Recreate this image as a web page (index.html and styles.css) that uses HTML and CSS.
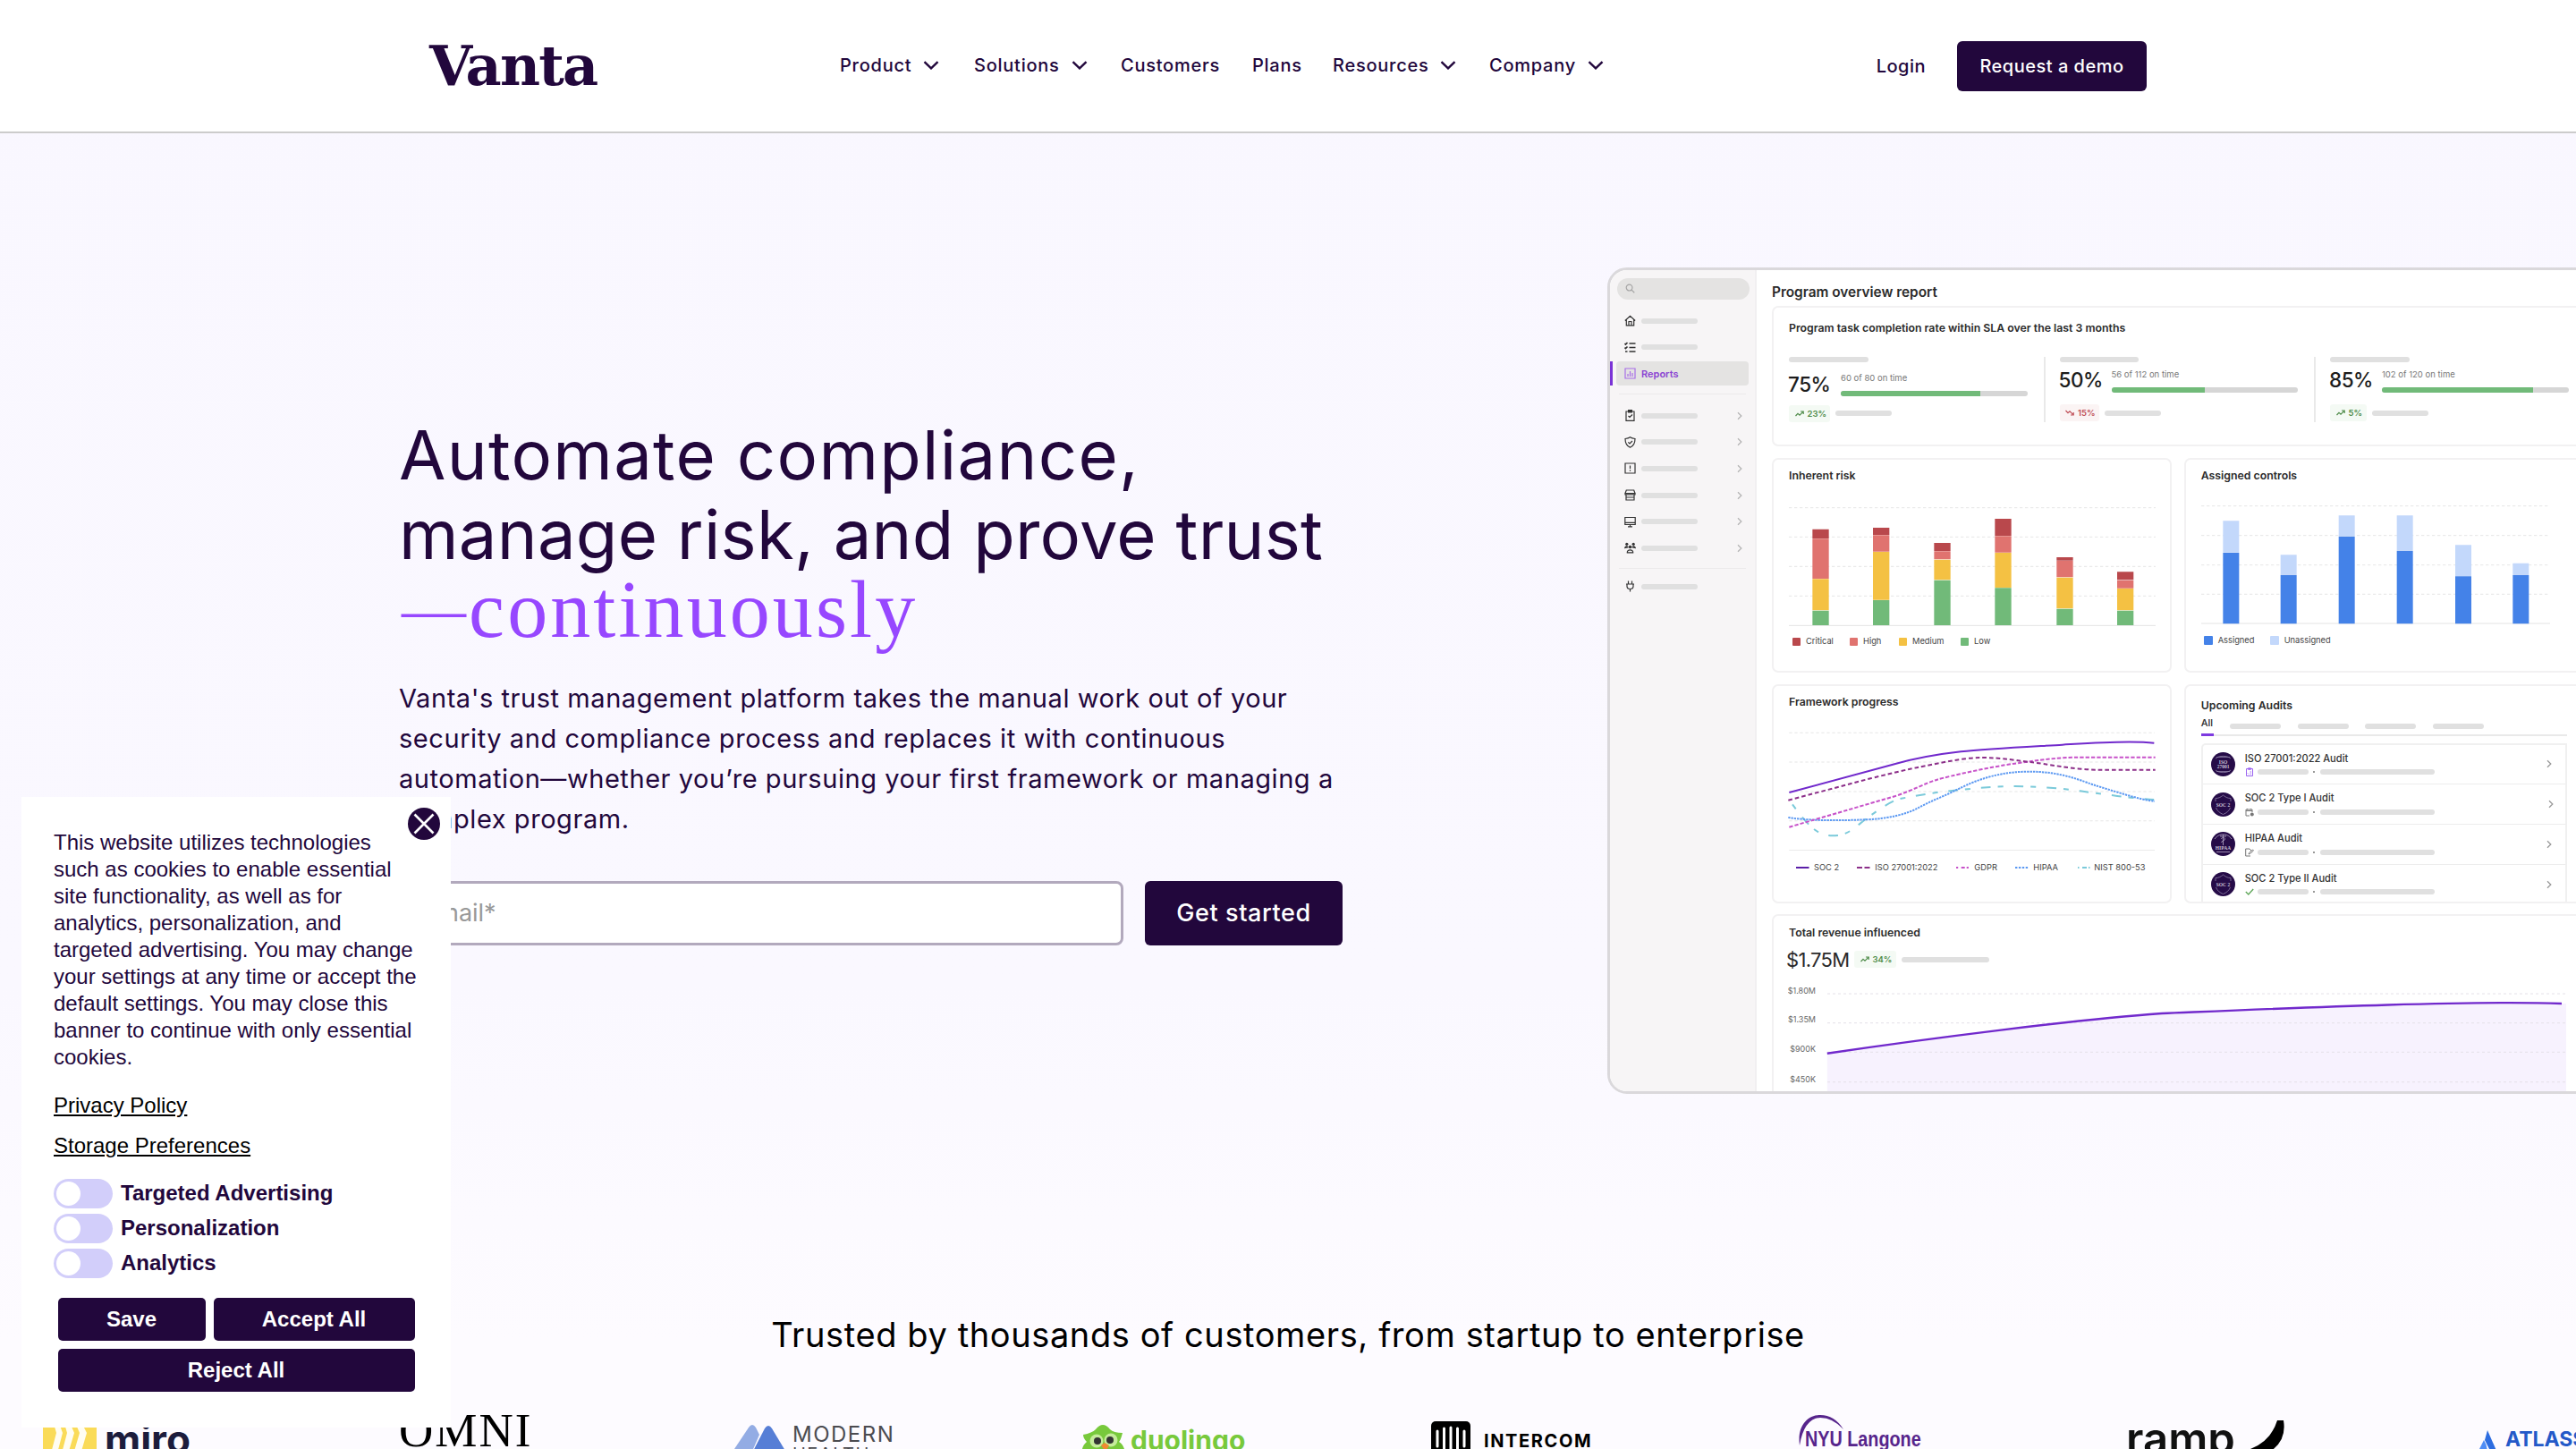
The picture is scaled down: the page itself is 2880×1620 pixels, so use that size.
FILE: index.html
```html
<!DOCTYPE html>
<html lang="en">

<head>
    <meta charset="UTF-8">
    <meta name="viewport" content="width=device-width, initial-scale=1.0">
    <title>Vanta</title>
    <link rel="stylesheet" href="styles.css">
</head>

<body>
    <!-- shared icons -->
    <svg class="sprite" width="0" height="0">
        <symbol id="chev-down" viewBox="0 0 18 10"><path d="M1.5 1.2 9 8.4l7.5-7.2" fill="none" stroke="#22073c" stroke-width="2.4"/></symbol>
        <symbol id="chev" viewBox="0 0 6 10"><path d="M1 1.2 4.8 5 1 8.8" fill="none" stroke="currentColor" stroke-width="1.3"/></symbol>
        <symbol id="up" viewBox="0 0 10 7"><path d="M.5 6 3 3.3l2 1.9L8.6 1.6M6 1h3.2v3" fill="none" stroke="currentColor" stroke-width="1.2"/></symbol>
        <symbol id="down" viewBox="0 0 10 7"><path d="M.5 1 3 3.7l2-1.9 3.6 3.6M6 6h3.2V3" fill="none" stroke="currentColor" stroke-width="1.2"/></symbol>
    </svg>

    <header class="header">
        <a class="logo">Vanta</a>
        <nav class="nav">
            <a>Product <svg><use href="#chev-down"/></svg></a>
            <a>Solutions <svg><use href="#chev-down"/></svg></a>
            <a>Customers</a>
            <a>Plans</a>
            <a>Resources <svg><use href="#chev-down"/></svg></a>
            <a>Company <svg><use href="#chev-down"/></svg></a>
        </nav>
        <div class="actions">
            <a class="login">Login</a>
            <a class="demo">Request a demo</a>
        </div>
    </header>

    <section class="hero">
        <div class="hero-text">
            <h1>
                <span class="l1">Automate compliance,</span><br>
                <span class="l2">manage risk, and prove trust</span>
                <em><span class="dash">—</span>continuously</em>
            </h1>
            <p>Vanta's trust management platform takes the manual work out of your<br>security and compliance process and replaces it with continuous<br>automation—whether you’re pursuing your first framework or managing a<br>complex program.</p>
            <div class="signup">
                <div class="email">Email*</div>
                <div class="start">Get started</div>
            </div>
        </div>

        <div class="app">
            <aside class="sidebar">
                <div class="search"><svg viewBox="0 0 12 12"><circle cx="5" cy="5" r="3.7"/><path d="m7.8 7.8 3.4 3.4"/></svg></div>
                <div class="item"><svg viewBox="0 0 13 13"><path d="M.8 6.5 6.5 1.3l5.700 5.200M2.300 5.500v6.300h8.400V5.500M5 11.800V7.500h3v4.300"/></svg><i></i></div>
                <div class="item"><svg viewBox="0 0 13 13"><path stroke-width="1.700" d="M5.500 2h7M5.500 6.500h7M5.500 11h7M.5 2l1 1 2-2M.5 6.500l1 1 2-2M1 11h2.500"/></svg><i></i></div>
                <div class="item active"><svg viewBox="0 0 13 13"><path d="M1 1h11v11H1zM4 10V7M6.500 10V4M9 10V6"/></svg><b>Reports</b></div>
                <hr>
                <div class="item"><svg viewBox="0 0 13 13"><path d="M2 2h9v10.300H2zM4.500 7l1.500 1.500 3-3"/><path class="solid" d="M4 0h5v3.500H4z"/></svg><i></i><svg class="go"><use href="#chev"/></svg></div>
                <div class="item"><svg viewBox="0 0 13 13"><path d="M6.500.8c1.800 1.300 3.500 1.500 5.500 1.700 0 5-1.300 8-5.500 9.800C2.300 10.500 1 7.500 1 2.500 3 2.300 4.700 2.100 6.500.8zM4.300 6.300 6 8l3-3"/></svg><i></i><svg class="go"><use href="#chev"/></svg></div>
                <div class="item"><svg viewBox="0 0 13 13"><path d="M1 1h11v11H1zM6.500 3.500V7M6.500 8.300v1.500"/></svg><i></i><svg class="go"><use href="#chev"/></svg></div>
                <div class="item"><svg viewBox="0 0 13 13"><path d="M2.300 1h8.400L12 4.500H1zM1 4.500v1.300h11V4.500M2 6v6h9V6M2 9h9"/></svg><i></i><svg class="go"><use href="#chev"/></svg></div>
                <div class="item"><svg viewBox="0 0 13 13"><path d="M.8 1.500h11.400v8H.8zM.8 7.300h11.400M4 11.800h5M6.500 9.500v2.300"/></svg><i></i><svg class="go"><use href="#chev"/></svg></div>
                <div class="item"><svg viewBox="0 0 13 13"><g class="solid"><circle cx="2.8" cy="2.3" r="1.6"/><circle cx="10.2" cy="2.3" r="1.6"/><circle cx="6.5" cy="5.5" r="1.8"/><path d="M0 7.300c.2-4 4.500-4 4.700-1zM13 7.300c-.2-4-4.500-4-4.700-1z"/></g><path d="M3.300 11.800c0-4 6.400-4 6.400 0z"/></svg><i></i><svg class="go"><use href="#chev"/></svg></div>
                <hr class="last">
                <div class="item"><svg viewBox="0 0 13 13"><path d="M4.500.5v3M8.500.5v3M2 4h9M3 4v2.500c0 4 7 4 7 0V4M6.500 9.500v3"/></svg><i></i></div>
            </aside>

            <main class="main">
                <h2>Program overview report</h2>
                <div class="cards">
                    <div class="card wide">
                        <h3>Program task completion rate within SLA over the last 3 months</h3>
                        <div class="metrics">
                            <div class="metric first">
                                <i class="ph title"></i>
                                <div class="rate">
                                    <strong>75%</strong>
                                    <div><span>60 of 80 on time</span><div class="track"><div style="width: 75%"></div></div></div>
                                </div>
                                <div class="trend"><span class="chip"><svg><use href="#up"/></svg>23%</span><i class="ph"></i></div>
                            </div>
                            <div class="metric">
                                <i class="ph title"></i>
                                <div class="rate">
                                    <strong>50%</strong>
                                    <div><span>56 of 112 on time</span><div class="track"><div style="width: 50%"></div></div></div>
                                </div>
                                <div class="trend"><span class="chip red"><svg><use href="#down"/></svg>15%</span><i class="ph"></i></div>
                            </div>
                            <div class="metric">
                                <i class="ph title"></i>
                                <div class="rate">
                                    <strong>85%</strong>
                                    <div><span>102 of 120 on time</span><div class="track"><div style="width: 81%"></div></div></div>
                                </div>
                                <div class="trend"><span class="chip small"><svg><use href="#up"/></svg>5%</span><i class="ph"></i></div>
                            </div>
                        </div>
                    </div>

                    <div class="card bars">
                        <h3>Inherent risk</h3>
                        <svg class="risk" viewBox="120 190 1230 410">
                            <path class="grid" d="M120 201h1230M120 299h1230M120 398h1230M120 497h1230"/>
                            <path class="axis" d="M120 596h1230"/>
                            <g fill="#b9484c"><path d="M199 273h55v31h-55zM402 268h55v24h-55zM607 319h55v27h-55zM811 238h55v57h-55zM1018 367h55v11h-55zM1221 416h55v27h-55z"/></g>
                            <g fill="#e0736f"><path d="M199 305h55v134h-55zM402 293h55v55h-55zM607 347h55v27h-55zM811 296h55v55h-55zM1018 379h55v55h-55zM1221 444h55v27h-55z"/></g>
                            <g fill="#f4c143"><path d="M199 440h55v105h-55zM402 349h55v161h-55zM607 375h55v68h-55zM811 352h55v117h-55zM1018 435h55v104h-55zM1221 472h55v73h-55z"/></g>
                            <g fill="#71ba79"><path d="M199 546h55v49h-55zM402 511h55v84h-55zM607 444h55v151h-55zM811 470h55v125h-55zM1018 540h55v55h-55zM1221 546h55v49h-55z"/></g>
                        </svg>
                        <div class="legend risk-legend">
                            <span class="critical">Critical</span><span class="high">High</span><span class="medium">Medium</span><span class="low">Low</span>
                        </div>
                    </div>

                    <div class="card bars">
                        <h3>Assigned controls</h3>
                        <svg class="controls" viewBox="122 185 1170 410">
                            <path class="grid" d="M122 196h1170M122 295h1170M122 394h1170M122 492h1170"/>
                            <path class="axis" d="M122 590h1170"/>
                            <path fill="#c3d8fb" d="M195 246h54v106h-54zM388 360h54v66h-54zM583 228h54v69h-54zM778 228h54v117h-54zM974 327h54v104h-54zM1167 388h54v38h-54z"/>
                            <path fill="#4482e8" d="M195 353h54v238h-54zM388 427h54v164h-54zM583 298h54v293h-54zM778 346h54v245h-54zM974 432h54v159h-54zM1167 427h54v164h-54z"/>
                        </svg>
                        <div class="legend controls-legend">
                            <span class="assigned">Assigned</span><span class="unassigned">Unassigned</span>
                        </div>
                    </div>

                    <div class="card progress">
                        <h3>Framework progress</h3>
                        <svg class="lines" viewBox="120 195 1235 410">
                            <path class="grid" d="M124 208h1226M124 306h1226M124 405h1226M124 503h1226"/>
                            <path class="axis" d="M124 602h1226"/>
                            <g fill="none" stroke-width="6">
                                <path stroke="#7bcada" stroke-dasharray="18 36 32 24" d="M135 448C180 510 215 553 268 553S340 528 380 498S470 433 500 428S600 409 650 404S800 387 880 387S1050 396 1100 403S1300 431 1350 432"/>
                                <path stroke="#5c99f2" stroke-dasharray="7 3" d="M121 492C200 504 300 502 380 499S520 480 560 458S640 422 680 402S800 340 920 338S1110 372 1150 384S1310 436 1350 437"/>
                                <path stroke="#c752c9" stroke-dasharray="13 6" d="M124 524L480 420C540 400 580 377 620 365S800 322 880 311S1020 290 1110 290H1352"/>
                                <path stroke="#8c2f89" stroke-dasharray="14 9" d="M121 434L400 360C480 341 520 330 560 323S700 291 770 291S900 303 940 307S1080 332 1160 332H1352"/>
                                <path stroke="#7129cc" d="M124 408L480 312C560 290 610 281 700 271S960 253 1040 248S1260 232 1348 242"/>
                            </g>
                        </svg>
                        <div class="legend line-legend">
                            <span><svg viewBox="0 0 15 2"><path stroke="#5b1fa8" d="M0 1h14.500"/></svg>SOC 2</span>
                            <span><svg viewBox="0 0 15 2"><path stroke="#8c2f89" stroke-dasharray="6 2.500" d="M0 1h14.500"/></svg>ISO 27001:2022</span>
                            <span><svg viewBox="0 0 15 2"><path stroke="#c752c9" stroke-dasharray="2.200 3.500 4 2" d="M0 1h14.500"/></svg>GDPR</span>
                            <span><svg viewBox="0 0 15 2"><path stroke="#5c99f2" stroke-dasharray="2.400 1.500" d="M0 1h14.500"/></svg>HIPAA</span>
                            <span class="nist"><svg viewBox="0 0 15 2"><path stroke="#7bcada" stroke-dasharray="1.500 3.500 5 2" d="M0 1h14.500"/></svg>NIST 800-53</span>
                        </div>
                    </div>

                    <div class="card audits">
                        <h3>Upcoming Audits</h3>
                        <div class="tabs"><span>All</span><i class="ph"></i><i class="ph"></i><i class="ph"></i><i class="ph"></i></div>
                        <div class="list">
                            <div class="audit">
                                <svg class="badge" viewBox="0 0 27 27"><circle cx="13.500" cy="13.500" r="13.500" fill="#260c48"/><path d="M5 7c4-3.500 13-3.500 17 0M6 5.500h15M5 20c4 3.500 13 3.500 17 0M6 21.500h15" fill="none" stroke="#8d7fa6" stroke-width=".8"/><text x="13.500" y="13" text-anchor="middle" class="badge-text">ISO</text><text x="13.500" y="18" text-anchor="middle" class="badge-text">27001</text></svg>
                                <div class="info">
                                    <b>ISO 27001:2022 Audit</b>
                                    <div><svg viewBox="0 0 10 10"><path stroke="#9a63f0" d="M1.500 1.500h7v8h-7zM3.500.8h3v1.500h-3zM3 6.500l1 1M5.500 5H7M5.500 7.200H7"/></svg><i class="ph"></i><u></u><i class="ph long"></i></div>
                                </div>
                                <svg class="go"><use href="#chev"/></svg>
                            </div>
                            <div class="audit">
                                <svg class="badge" viewBox="0 0 27 27"><circle cx="13.500" cy="13.500" r="13.500" fill="#260c48"/><path d="M5 10V6.500c4 0 6-1.500 8.500-3.500 2.500 2 4.500 3.500 8.500 3.500V10M5.500 17c1.500 4 4.500 6 8 7.500 3.500-1.500 6.500-3.500 8-7.500" fill="none" stroke="#8d7fa6" stroke-width=".8"/><text x="13.500" y="15.500" text-anchor="middle" class="badge-text">SOC 2</text></svg>
                                <div class="info">
                                    <b>SOC 2 Type I Audit</b>
                                    <div><svg viewBox="0 0 10 10"><path stroke="#777" d="M5 9H1V2h7v3M1 3.500h7M2.500 1v1M6.500 1v1"/><circle cx="7.800" cy="7.500" r="2" fill="#777"/></svg><i class="ph"></i><u></u><i class="ph long"></i></div>
                                </div>
                                <svg class="go shift"><use href="#chev"/></svg>
                            </div>
                            <div class="audit">
                                <svg class="badge" viewBox="0 0 27 27"><circle cx="13.500" cy="13.500" r="13.500" fill="#260c48"/><path d="M4 8c3-4 6-5 9.500-5s6.500 1 9.500 5M13.500 3v12M10 5h7M11.500 8c0-2 4-2 4 0s-4 2-4 4M6 22.500h15" fill="none" stroke="#a99dbd" stroke-width=".9"/><text x="13.500" y="19.500" text-anchor="middle" class="badge-text">HIPAA</text></svg>
                                <div class="info">
                                    <b>HIPAA Audit</b>
                                    <div><svg viewBox="0 0 10 10"><path stroke="#777" d="M6 9H.7V1H5l2 2M4 7l.5-1.500 4-3.500 1 1-4 3.500z"/></svg><i class="ph"></i><u></u><i class="ph long"></i></div>
                                </div>
                                <svg class="go"><use href="#chev"/></svg>
                            </div>
                            <div class="audit">
                                <svg class="badge" viewBox="0 0 27 27"><circle cx="13.500" cy="13.500" r="13.500" fill="#260c48"/><path d="M5 10V6.500c4 0 6-1.500 8.500-3.500 2.500 2 4.500 3.500 8.500 3.500V10M5.500 17c1.500 4 4.500 6 8 7.500 3.500-1.500 6.500-3.500 8-7.500" fill="none" stroke="#8d7fa6" stroke-width=".8"/><text x="13.500" y="15.500" text-anchor="middle" class="badge-text">SOC 2</text></svg>
                                <div class="info">
                                    <b>SOC 2 Type II Audit</b>
                                    <div><svg viewBox="0 0 10 10"><path stroke="#62a85c" stroke-width="1.400" d="m.8 5 3 3 5.400-6"/></svg><i class="ph"></i><u></u><i class="ph long"></i></div>
                                </div>
                                <svg class="go"><use href="#chev"/></svg>
                            </div>
                        </div>
                    </div>

                    <div class="card wide revenue">
                        <h3>Total revenue influenced</h3>
                        <div class="total"><strong>$1.75M</strong><span class="chip"><svg><use href="#up"/></svg>34%</span><i class="ph"></i></div>
                        <svg class="area" viewBox="0 0 870 180">
                            <path fill="#f7f2fe" d="M43.800 82.700C150 67 320 45 418 38C540 33 760 23 870 27V180H43.800z"/>
                            <path stroke="#e4e0e8" stroke-dasharray="3 3" d="M44 16h826M44 48.700h826M44 81.300h826M44 114.700h826"/>
                            <path fill="none" stroke="#7129cc" stroke-width="2.400" d="M43.800 82.700C150 67 320 45 418 38C540 33 760 23 865 27"/>
                            <g class="ticks"><text x="31" y="15.700">$1.80M</text><text x="31" y="48.300">$1.35M</text><text x="31" y="81.300">$900K</text><text x="31" y="114.700">$450K</text></g>
                        </svg>
                    </div>
                </div>
            </main>
        </div>
    </section>

    <section class="trusted">
        <h2>Trusted by thousands of customers, from startup to enterprise</h2>
        <div class="logos">
            <div class="miro"><svg viewBox="0 0 60 60"><rect width="60" height="60" rx="12" fill="#fadb58"/><path fill="#fffdf2" d="M11 8h6l5 14-9 34H6l9-34zM23 8h6l6 14-10 34h-7l9-34zM35 8h7l7 14-10 34h-8l10-34z"/></svg><span>miro</span></div>
            <div class="omni">OMNI</div>
            <div class="modern"><svg viewBox="0 0 56 40"><path fill="#93ace4" d="m-8 40 24-36q4-6 8 0l4 8-12 28z"/><path fill="#567ed6" d="M16 40 34 5q4-6 8 0l21 35z"/></svg><div>MODERN<small>HEALTH</small></div></div>
            <div class="duo"><svg viewBox="0 0 48 40"><path fill="#78c93c" d="M2 12q10-2 14-6 8-10 16 0 4 4 14 4-2 8-4 10 4 2 6 8l-6 12H2q-4-14 4-20-4-4-4-8z"/><circle cx="17" cy="19" r="7.500" fill="#c5eb9b"/><circle cx="33" cy="18" r="7.500" fill="#c5eb9b"/><circle cx="18" cy="19" r="4" fill="#333"/><circle cx="32" cy="18" r="4" fill="#333"/><path fill="#f08a32" d="m22 24 4-3 5 3-4 7z"/></svg><span>duolingo</span></div>
            <div class="intercom"><svg viewBox="0 0 44 44"><rect width="44" height="44" rx="5"/><path d="M7 11v17M14.500 8v23M22 7v25M29.500 8v23M37 11v17" stroke="#fff" stroke-width="3" stroke-linecap="round"/></svg><span>INTERCOM</span></div>
            <div class="nyu"><svg viewBox="0 0 60 40"><path d="M3 36C0 14 12 2 26 2q16 0 26 16Q40 5 26 5 8 6 3 36z" fill="#57258c"/></svg><span>NYU Langone</span></div>
            <div class="ramp"><span>ramp</span><svg viewBox="0 0 44 36"><path d="M0 34Q28 26 36 0h7q4 24-17 36H0z"/></svg></div>
            <div class="atlas"><svg viewBox="0 0 22 30"><path fill="#2d6de0" d="M11 1 22 26h-7L8 12z"/><path fill="#4f8df5" d="M7 12q5 8 3 14H0z"/></svg><span>ATLASSIAN</span></div>
        </div>
    </section>

    <!-- cookie banner -->
    <div class="cookies">
        <svg class="close" viewBox="0 0 36 36"><circle cx="18" cy="18" r="18" fill="#22073c"/><path d="m7.500 7.500 21 21m0-21-21 21" stroke="#fff" stroke-width="2.600"/></svg>
        <p>This website utilizes technologies<br>such as cookies to enable essential<br>site functionality, as well as for<br>analytics, personalization, and<br>targeted advertising. You may change<br>your settings at any time or accept the<br>default settings. You may close this<br>banner to continue with only essential<br>cookies.</p>
        <a>Privacy Policy</a>
        <a>Storage Preferences</a>
        <div class="toggles">
            <div><i></i>Targeted Advertising</div>
            <div><i></i>Personalization</div>
            <div><i></i>Analytics</div>
        </div>
        <div class="buttons">
            <span>Save</span>
            <span>Accept All</span>
            <span class="reject">Reject All</span>
        </div>
    </div>
</body>

</html>
```
FILE: styles.css
```css
* {
    box-sizing: border-box;
}

body {
    margin: 0;
    height: 1620px;
    overflow: hidden;
    font-family: Inter, "Liberation Sans", sans-serif;
    color: #22073c;
    background: linear-gradient(#f9f7ff 0, #faf8ff 1100px, #fdfbff 1500px);
}

.sprite {
    position: absolute;
}

h1, h2, h3, p {
    margin: 0;
}

svg {
    display: block;
    flex: none;
}

/* header */
.header {
    display: flex;
    align-items: center;
    height: 149px;
    padding: 0 480px;
    background: #fff;
    border-bottom: 2px solid #ccc;
}

.logo {
    width: 459px;
    font-family: "DejaVu Serif", serif;
    font-weight: bold;
    font-size: 62px;
    line-height: 60px;
    letter-spacing: -1.8px;
}

.nav {
    display: grid;
    grid-template-columns: 150px 164px 147px 90px 175px 130px;
    padding-bottom: 1px;
    font-size: 20px;
    letter-spacing: .75px;
    font-weight: 500;
}

.nav a {
    display: flex;
    align-items: center;
    gap: 13px;
}

.nav svg {
    width: 18px;
    height: 10px;
}

.actions {
    display: flex;
    align-items: center;
    margin-left: auto;
    font-size: 20px;
    letter-spacing: .5px;
    font-weight: 500;
}

.login {
    margin-right: 35px;
}

.demo {
    width: 212px;
    line-height: 56px;
    text-align: center;
    color: #fff;
    background: #22073c;
    border-radius: 6px;
}

/* hero */
.hero {
    display: flex;
    height: 1318px;
    padding: 150px 0 0 446px;
    overflow: hidden;
}

.hero-text {
    flex: none;
    width: 1351px;
    padding-top: 165px;
}

h1 {
    font-size: 76px;
    line-height: 88.6px;
    font-weight: 400;
    white-space: nowrap;
}

.l1 {
    letter-spacing: 1.3px;
}

.l2 {
    letter-spacing: .25px;
}

h1 em {
    display: block;
    margin-top: -3px;
    font-family: "Liberation Serif", serif;
    font-style: normal;
    font-size: 90px;
    letter-spacing: 3.1px;
    color: #9747ff;
}

h1 .dash {
    margin-left: 3px;
    font-size: 72px;
    line-height: 0;
    vertical-align: 7px;
}

.hero-text p {
    margin-top: 31px;
    font-size: 29px;
    line-height: 45px;
    letter-spacing: .56px;
    white-space: nowrap;
}

.signup {
    display: flex;
    gap: 24px;
    margin-top: 47px;
}

.email {
    width: 810px;
    height: 72px;
    padding-left: 24px;
    line-height: 66px;
    font-size: 27px;
    color: #999;
    background: #fff;
    border: 3px solid #b2a9bd;
    border-radius: 8px;
}

.start {
    width: 221px;
    line-height: 72px;
    text-align: center;
    font-size: 27px;
    letter-spacing: .6px;
    font-weight: 500;
    color: #fff;
    background: #22073c;
    border-radius: 6px;
}

/* product preview */
.app {
    display: flex;
    flex: none;
    width: 1120px;
    height: 924px;
    overflow: hidden;
    background: #fff;
    border: 3px solid #dad8db;
    border-radius: 22px;
    color: #2b2b2b;
}

.ph, .item i {
    display: block;
    flex: none;
    width: 63px;
    height: 6px;
    background: #e0e0e0;
    border-radius: 3px;
}

.sidebar {
    flex: none;
    width: 164px;
    padding-top: 9px;
    background: #f7f5f6;
    border-right: 2px solid #f1eff1;
}

.search {
    width: 148px;
    height: 24px;
    margin: 0 0 9px 8px;
    padding: 6px 9px;
    background: #e4e3e2;
    border-radius: 12px;
}

.search svg {
    width: 11px;
    fill: none;
    stroke: #a5a5a5;
    stroke-width: 1.3;
}

.item {
    display: flex;
    align-items: center;
    gap: 6.5px;
    height: 29.6px;
    margin: 0 7px;
    padding-left: 8.5px;
    color: #b5b5b5;
}

.item svg {
    width: 13px;
    height: 13px;
    fill: none;
    stroke: #333;
    stroke-width: 1.2;
}

.item .solid {
    fill: #333;
    stroke: none;
}

.item .go {
    width: 6px;
    height: 10px;
    margin-left: 37px;
    stroke: none;
}

.item.active {
    position: relative;
    height: 27px;
    margin: 1.3px 7px 0;
    background: #e4e3e2;
    border-radius: 4px;
    font-size: 11px;
    color: #8a43d2;
}

/* marker on the edge of the sidebar */
.item.active::before {
    content: "";
    position: absolute;
    left: -7px;
    top: 0;
    width: 3px;
    height: 27px;
    background: #7a33d6;
}

.item.active svg {
    stroke: #a86ee8;
}

.item b {
    font-weight: 600;
}

.sidebar hr {
    height: 1px;
    margin: 8.5px 10px 9px;
    border: 0;
    background: #eceaeb;
}

.sidebar .last {
    margin: 7px 10px 5.5px;
}

.main {
    flex: none;
    padding: 15px 0 0 17px;
}

.main h2 {
    font-size: 15.4px;
    line-height: 20px;
    font-weight: 600;
}

.cards {
    display: grid;
    grid-template-columns: 446.7px 446.7px;
    grid-template-rows: 157px 240px 245px 300px;
    gap: 12.8px 14px;
    margin-top: 5px;
}

.card {
    padding: 10.2px 0 0 17px;
    overflow: hidden;
    border: 2px solid #f2f1f2;
    border-radius: 7px;
}

.wide {
    grid-column: 1 / 3;
    padding-top: 15px;
}

h3 {
    font-size: 12.3px;
    line-height: 16px;
    font-weight: 600;
}

.metrics {
    display: flex;
    gap: 16px;
    margin-top: 24px;
}

.metric {
    flex: none;
    width: 286.5px;
    height: 73px;
    border-right: 2px solid #e9e9e9;
}

.metric:last-child {
    border: 0;
}

.title {
    width: 88.5px;
}

.rate {
    display: flex;
    gap: 13px;
    height: 39.5px;
    margin-top: 7.6px;
}

.first .rate {
    height: 36px;
    margin-top: 11.5px;
}

.rate strong {
    width: 46px;
    margin-left: -1px;
    font-size: 22.5px;
    line-height: 24px;
    font-weight: 500;
    letter-spacing: -.5px;
    color: #1c1c1c;
}

.first strong {
    margin-top: 1.5px;
}

.rate span {
    display: block;
    font-size: 9.5px;
    line-height: 12px;
    color: #777;
}

.track {
    width: 208.5px;
    height: 6.5px;
    margin-top: 8px;
    overflow: hidden;
    background: #d6d6d6;
    border-radius: 4px;
}

.track div {
    height: 100%;
    background: #71ba79;
}

.trend {
    display: flex;
    align-items: center;
    gap: 6px;
}

.chip {
    display: flex;
    align-items: center;
    gap: 4px;
    width: 46px;
    height: 19px;
    padding-left: 6.5px;
    font-size: 9.5px;
    font-weight: 600;
    color: #4f8c4a;
    background: #f4faf4;
    border-radius: 3px;
}

.chip svg {
    width: 10px;
    height: 7px;
}

.chip.red {
    width: 44.5px;
    color: #c05059;
    background: #fbf4f4;
}

.chip.small {
    width: 41px;
}

/* charts */
.grid {
    fill: none;
    stroke: #e6e6e6;
    stroke-width: 3;
    stroke-dasharray: 10 8;
}

.axis {
    stroke: #e3e3e3;
    stroke-width: 3;
}

.risk {
    width: 410px;
    margin-top: 23.8px;
}

.controls {
    width: 390px;
    margin-top: 22.2px;
}

.lines {
    width: 411.7px;
    margin: 22px 0 0 -1px;
}

.legend {
    display: grid;
    margin: 11px 0 0 3.5px;
    font-size: 9.3px;
    line-height: 12px;
    white-space: nowrap;
    color: #444;
}

.legend span {
    display: flex;
    align-items: center;
}

.bars span::before {
    content: "";
    width: 9.5px;
    height: 9.5px;
    margin-right: 6px;
    border-radius: 1px;
}

.risk-legend {
    grid-template-columns: 64px 55px 69px auto;
}

.controls-legend {
    grid-template-columns: 74px auto;
}

.critical::before { background: #b9484c; }
.high::before { background: #e0736f; }
.medium::before { background: #f4c143; }
.low::before { background: #71ba79; }
.assigned::before { background: #4482e8; }
.unassigned::before { background: #c3d8fb; }

.line-legend {
    grid-template-columns: 68.3px 111px 66px 69.4px auto;
    margin: 13px 0 0 8px;
}

.line-legend svg {
    width: 15px;
    height: 2px;
    margin-right: 5px;
    stroke-width: 2;
}

.line-legend .nist svg {
    margin-right: 3.5px;
}

/* audits */
.audits {
    padding-top: 14.5px;
}

.tabs {
    display: flex;
    gap: 18.6px;
    width: 409px;
    height: 20.5px;
    margin-top: 5px;
    border-bottom: 2px solid #e9e9e9;
}

.tabs span {
    width: 14px;
    height: 21px;
    border-bottom: 3px solid #7e3ae0;
    font-size: 11px;
    line-height: 13px;
    font-weight: 500;
}

.tabs .ph {
    width: 57px;
    margin-top: 7px;
}

.list {
    width: 409px;
    height: 190px;
    margin-top: 8px;
    border: 2px solid #f0f0f0;
    border-radius: 5px 0 0 0;
}

.audit {
    display: flex;
    align-items: center;
    height: 44.7px;
    padding-left: 9px;
    border-bottom: 1.5px solid #ededed;
    color: #999;
}

.badge {
    width: 27px;
    height: 27px;
}

.badge-text {
    font: bold 5.5px "Liberation Serif", serif;
    fill: #c9c0d6;
}

.info {
    flex: none;
    width: 348px;
    padding-left: 11px;
}

.info b {
    display: block;
    font-size: 11.1px;
    line-height: 14px;
    font-weight: 500;
    color: #333;
}

.info div {
    display: flex;
    align-items: center;
    margin-top: 3.5px;
}

.info div svg {
    width: 10px;
    height: 10px;
    margin-right: 4px;
    fill: none;
}

.info .ph {
    width: 57px;
}

.info .long {
    width: 128px;
}

.info u {
    width: 2px;
    height: 2px;
    margin: 0 6px 0 5px;
    border-radius: 1px;
    background: #777;
}

.audit .go {
    width: 6px;
    height: 10px;
}

.audit .shift {
    margin-left: 2px;
}

/* revenue */
.revenue {
    padding-top: 10.5px;
}

.total {
    display: flex;
    align-items: center;
    gap: 6px;
    margin: 9px 0 0 -3px;
}

.total strong {
    width: 70px;
    font-size: 22px;
    line-height: 26px;
    font-weight: 400;
    letter-spacing: -.7px;
}

.total .chip {
    width: 47px;
}

.total .ph {
    width: 98px;
}

.area {
    width: 870px;
    height: 180px;
    margin: 9px 0 0 -1px;
}

.ticks {
    font-size: 9px;
    text-anchor: end;
    fill: #666;
}

/* customers */
.trusted h2 {
    font-size: 38px;
    line-height: 50px;
    font-weight: 400;
    letter-spacing: .6px;
    text-align: center;
    color: #000;
}

.logos {
    display: grid;
    grid-template-columns: 398px 375px 388px 391px 409px 368px 393px 160px;
    height: 103px;
    padding: 63px 0 0 48px;
    overflow: hidden;
}

.logos > div {
    display: flex;
    align-items: flex-start;
    white-space: nowrap;
}

.logos span {
    line-height: 1;
}

.miro {
    font-size: 44px;
    font-weight: 700;
    color: #1c1c3c;
    gap: 9px;
}

.miro svg {
    width: 60px;
}

.miro span {
    padding-top: 7px;
}

.omni {
    font-family: "Liberation Serif", serif;
    font-size: 53px;
    line-height: 38px;
    letter-spacing: 2px;
    color: #000;
}

.modern {
    gap: 9px;
    font-size: 24px;
    line-height: 24px;
    letter-spacing: 1.5px;
    color: #4b4b50;
    padding-top: 12px;
}

.modern svg {
    width: 56px;
}

.modern small {
    display: block;
    font-size: 20px;
    line-height: 20px;
}

.duo {
    gap: 7px;
    padding-top: 12px;
    font-size: 30px;
    font-weight: 700;
    color: #78c93c;
}

.duo svg {
    width: 48px;
}

.duo span {
    padding-top: 3px;
}

.intercom {
    gap: 15px;
    padding-top: 9px;
    font-size: 20px;
    font-weight: 700;
    letter-spacing: 1.6px;
    color: #000;
}

.intercom svg {
    width: 44px;
}

.intercom span {
    padding-top: 12px;
}

.nyu {
    font-family: "Liberation Sans", sans-serif;
    font-size: 23px;
    font-weight: 700;
    color: #57258c;
}

.nyu svg {
    width: 60px;
    margin-right: -51px;
}

.nyu span {
    padding-top: 18px;
    transform: scaleX(.86);
    transform-origin: left;
}

.ramp {
    gap: 11px;
    font-size: 49px;
    font-weight: 600;
    color: #111;
}

.ramp span {
    padding-top: 4px;
}

.ramp svg {
    width: 44px;
    margin-top: 8px;
}

.atlas {
    gap: 9px;
    padding-top: 18px;
    font-size: 23px;
    font-weight: 700;
    color: #2459c8;
}

.atlas svg {
    width: 22px;
}

/* cookie banner */
.cookies {
    position: fixed;
    left: 24px;
    top: 891px;
    width: 480px;
    height: 705px;
    padding: 36px 36px 0;
    background: #fff;
    font-family: "Liberation Sans", Arial, sans-serif;
    font-size: 24px;
    white-space: nowrap;
}

.cookies p {
    margin-bottom: 24px;
    line-height: 30px;
}

.cookies a {
    display: block;
    margin-bottom: 15px;
    line-height: 30px;
    color: #000;
    text-decoration: underline;
}

.close {
    position: absolute;
    left: 432px;
    top: 12px;
    width: 36px;
}

.toggles {
    margin-top: 18.5px;
    font-weight: bold;
}

.toggles div {
    display: flex;
    align-items: center;
    gap: 9px;
    height: 39px;
}

.toggles i {
    width: 66px;
    height: 33px;
    padding: 3px;
    border-radius: 17px;
    background: #d2cefa;
}

.toggles i::before {
    content: "";
    display: block;
    width: 27px;
    height: 27px;
    border-radius: 50%;
    background: #fff;
}

.buttons {
    display: grid;
    grid-template-columns: 165px 225px;
    gap: 9px;
    margin: 19px 0 0 4.5px;
}

.buttons span {
    line-height: 48px;
    text-align: center;
    font-weight: bold;
    color: #fff;
    background: #22073c;
    border-radius: 5px;
}

.buttons .reject {
    grid-column: 1 / 3;
}
```
